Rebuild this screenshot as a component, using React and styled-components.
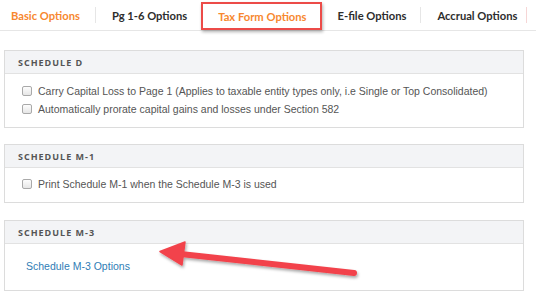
import React from "react";
import styled, { createGlobalStyle } from "styled-components";

const Global = createGlobalStyle`
  html, body { margin: 0; padding: 0; background: #fff; }
  body { width: 536px; height: 295px; overflow: hidden; position: relative; }
  * { box-sizing: border-box; }
`;

const Page = styled.div`
  position: relative;
  width: 536px;
  height: 295px;
`;

const TabBar = styled.div`
  display: flex;
  align-items: center;
  height: 31px;
  border-bottom: 1px solid #e6e6e6;
`;

const Tab = styled.div`
  display: flex;
  align-items: center;
  height: ${(p) => (p.$active ? "28px" : "30px")};
  margin-top: ${(p) => (p.$active ? "2px" : "0")};
  padding: 0 ${(p) => p.$pr}px 0 ${(p) => p.$pl}px;
  font-family: Lato, "Open Sans", sans-serif;
  font-weight: 700;
  font-size: 11.2px;
  color: ${(p) => (p.$orange ? "#f7882f" : "#2d2d2d")};
  border: ${(p) => (p.$active ? "2px solid #ec4b48" : "none")};
  box-shadow: ${(p) => (p.$active ? "1px 2px 3px rgba(0,0,0,0.3)" : "none")};
  white-space: nowrap;
`;

const Divider = styled.div`
  width: 1px;
  height: 16px;
  flex: none;
  background: ${(p) => p.$color || "#e6e6e6"};
`;

const Content = styled.div`
  display: flex;
  flex-direction: column;
  gap: 16px;
  padding: 19px 12px 0 4px;
`;

const Panel = styled.section`
  border: 1px solid #dcdcdc;
  background: #fff;
  margin-top: ${(p) => p.$mt || 0}px;
`;

const PanelHeader = styled.div`
  height: 23px;
  display: flex;
  align-items: center;
  padding-left: 13px;
  background: #f3f4f6;
  border-bottom: 1px solid #e2e2e2;
  font-family: "Open Sans", sans-serif;
  font-weight: 700;
  font-size: 9px;
  letter-spacing: 1px;
  color: #555;
`;

const PanelBody = styled.div`
  padding: ${(p) => p.$pad};
  display: flex;
  flex-direction: column;
`;

const Row = styled.label`
  display: flex;
  align-items: center;
  height: 18px;
  gap: 6px;
  font-family: "Liberation Sans", Arial, sans-serif;
  font-size: 10.5px;
  color: #555;
  white-space: nowrap;
`;

const Check = styled.span`
  width: 10px;
  height: 10px;
  border: 1px solid #a9a9a9;
  border-radius: 2px;
  background: linear-gradient(#fdfdfd, #e6e6e6);
  flex: none;
`;

const Link = styled.a`
  font-family: "Liberation Sans", Arial, sans-serif;
  font-size: 10.5px;
  color: #2f7db5;
  text-decoration: none;
  line-height: 16px;
`;

const ArrowSvg = styled.svg`
  position: absolute;
  left: 0;
  top: 0;
  pointer-events: none;
`;

export default function App() {
  return (
    <Page>
      <Global />
      <TabBar>
        <Tab $orange $pl={11} $pr={15}>Basic Options</Tab>
        <Divider />
        <Tab $pl={16} $pr={14}>Pg 1-6 Options</Tab>
        <Tab $orange $active $pl={15} $pr={13}>Tax Form Options</Tab>
        <Tab $pl={16} $pr={14}>E-file Options</Tab>
        <Divider />
        <Tab $pl={16} $pr={9}>Accrual Options</Tab>
        <Divider $color="#f6d6d6" />
      </TabBar>
      <Content>
        <Panel>
          <PanelHeader>SCHEDULE D</PanelHeader>
          <PanelBody $pad="8px 17px 9px">
            <Row>
              <Check />
              Carry Capital Loss to Page 1 (Applies to taxable entity types only, i.e Single or Top Consolidated)
            </Row>
            <Row>
              <Check />
              Automatically prorate capital gains and losses under Section 582
            </Row>
          </PanelBody>
        </Panel>
        <Panel>
          <PanelHeader>SCHEDULE M-1</PanelHeader>
          <PanelBody $pad="7px 17px 9px">
            <Row>
              <Check />
              Print Schedule M-1 when the Schedule M-3 is used
            </Row>
          </PanelBody>
        </Panel>
        <Panel $mt={1}>
          <PanelHeader>SCHEDULE M-3</PanelHeader>
          <PanelBody $pad="14px 21px 16px">
            <Link href="#">Schedule M-3 Options</Link>
          </PanelBody>
        </Panel>
      </Content>
      <ArrowSvg width="536" height="295" viewBox="0 0 536 295">
        <defs>
          <filter id="sh" x="-20%" y="-50%" width="140%" height="200%">
            <feDropShadow dx="1" dy="2" stdDeviation="1.5" floodColor="#000" floodOpacity="0.35" />
          </filter>
        </defs>
        <g filter="url(#sh)" fill="#f2434b" stroke="#f2434b">
          <line x1="176" y1="253.5" x2="354" y2="273" strokeWidth="6" strokeLinecap="round" />
          <polygon points="160,251.5 185,242 182,265" strokeWidth="1.5" strokeLinejoin="round" />
        </g>
      </ArrowSvg>
    </Page>
  );
}
